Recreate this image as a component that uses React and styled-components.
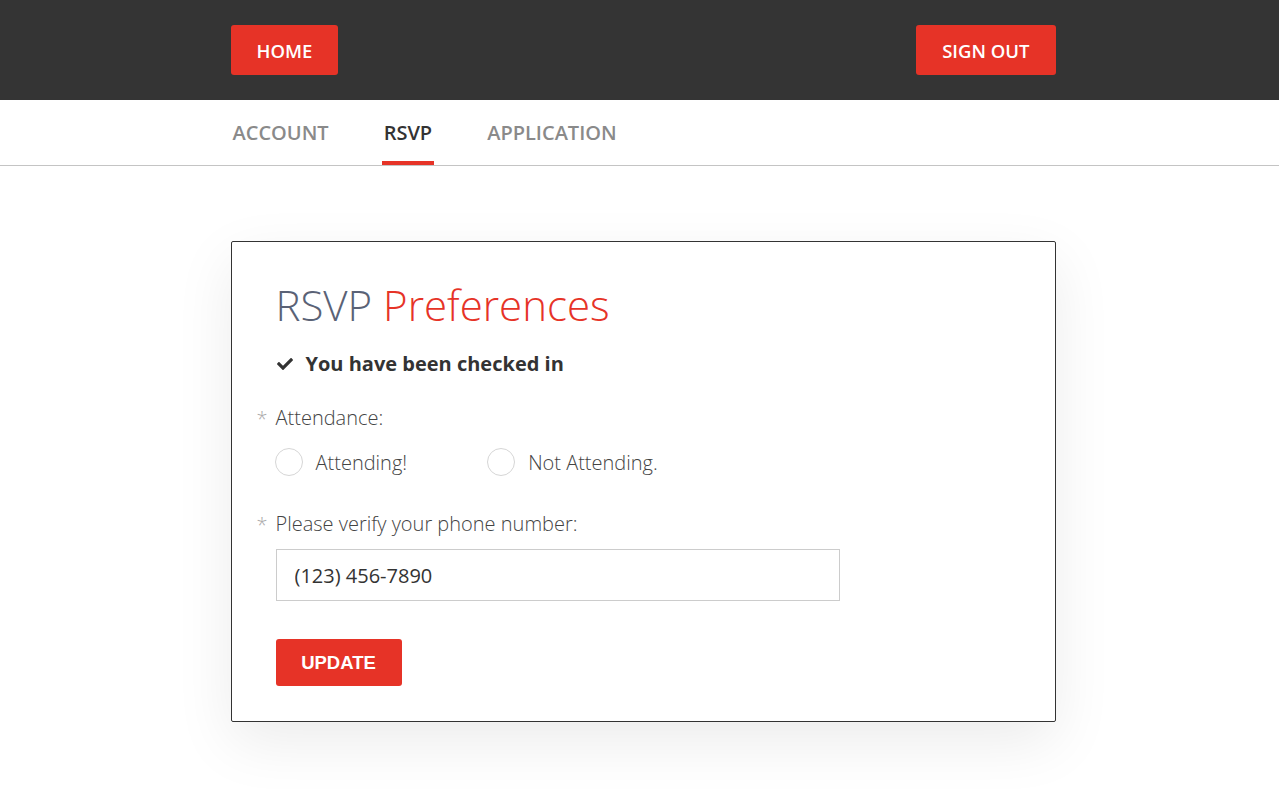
import styled, { createGlobalStyle } from "styled-components"
import { FaCheck } from "react-icons/fa"

const Global = createGlobalStyle`
  body {
    margin: 0;
    font-family: "Open Sans", "Liberation Sans", sans-serif;
    background: #fff;
  }
`

const TopBar = styled.header`
  height: 100px;
  background: #343434;
`

const Inner = styled.div`
  width: 825px;
  margin-left: calc(50% - 409px);
  box-sizing: border-box;
`

const TopInner = styled(Inner)`
  height: 100%;
  display: flex;
  align-items: center;
  justify-content: space-between;
`

const NavButton = styled.button`
  height: 50px;
  padding: 0 26px;
  border: none;
  border-radius: 3px;
  background: #e63327;
  color: #fff;
  font-family: "Open Sans", sans-serif;
  font-weight: 600;
  font-size: 18.5px;
  cursor: pointer;
`

const TabBar = styled.nav`
  height: 65px;
  border-bottom: 1px solid #c4c4c4;
`

const TabRow = styled(Inner)`
  height: 100%;
  display: flex;
  gap: 51px;
`

const Tab = styled.a`
  position: relative;
  display: flex;
  align-items: center;
  padding: 0 2px;
  font-size: 20px;
  font-weight: 600;
  color: ${p => (p.$active ? "#333" : "#8a8a8a")};
  &::after {
    content: "";
    display: ${p => (p.$active ? "block" : "none")};
    position: absolute;
    left: 0;
    right: 0;
    bottom: 0;
    height: 4px;
    background: #e63327;
  }
`

const Main = styled.main`
  padding-top: 75px;
  padding-bottom: 80px;
`

const Card = styled(Inner)`
  border: 1px solid #333;
  border-radius: 2px;
  padding: 38px 44px 35px;
  box-shadow: 0 20px 60px rgba(0, 0, 0, 0.08);
`

const Title = styled.h1`
  margin: 0;
  font-weight: 300;
  font-size: 42px;
  line-height: 50px;
  color: #5a6276;
  span {
    color: #e63327;
  }
`

const Checked = styled.p`
  margin: 20px 0 0;
  display: flex;
  align-items: center;
  gap: 13px;
  font-size: 20px;
  line-height: 27px;
  font-weight: 700;
  color: #333;
  svg {
    margin-left: 1px;
    color: #333;
  }
`

const Field = styled.div`
  margin-top: ${p => p.$top || 28}px;
`

const Label = styled.label`
  position: relative;
  display: block;
  font-size: 20px;
  line-height: 27px;
  font-weight: 300;
  color: #444;
  &::before {
    content: "*";
    position: absolute;
    left: -19px;
    top: 1px;
    color: #aaa;
  }
`

const RadioRow = styled.div`
  display: flex;
  gap: 81px;
  margin-top: 17px;
`

const RadioOption = styled.label`
  display: flex;
  align-items: center;
  gap: 13px;
  font-size: 20px;
  line-height: 27px;
  font-weight: 300;
  color: #444;
`

const Circle = styled.span`
  width: 26px;
  height: 26px;
  margin-left: -1px;
  border: 1px solid #d6d6d6;
  border-radius: 50%;
`

const PhoneInput = styled.input`
  display: block;
  margin-top: 12px;
  width: 564px;
  height: 52px;
  box-sizing: border-box;
  border: 1px solid #ccc;
  padding: 0 18px;
  font-family: "Open Sans", sans-serif;
  font-size: 20px;
  color: #333;
  outline: none;
`

const UpdateButton = styled.button`
  display: block;
  margin-top: 38px;
  width: 126px;
  height: 47px;
  border: none;
  border-radius: 3px;
  background: #e63327;
  color: #fff;
  font-family: "Liberation Sans", Arial, sans-serif;
  font-weight: 700;
  font-size: 18.5px;
`

export default function App() {
  return (
    <>
      <Global />
      <TopBar>
        <TopInner>
          <NavButton>HOME</NavButton>
          <NavButton>SIGN OUT</NavButton>
        </TopInner>
      </TopBar>
      <TabBar>
        <TabRow>
          <Tab>ACCOUNT</Tab>
          <Tab $active>RSVP</Tab>
          <Tab>APPLICATION</Tab>
        </TabRow>
      </TabBar>
      <Main>
        <Card>
          <Title>
            RSVP <span>Preferences</span>
          </Title>
          <Checked>
            <FaCheck size={16} />
            You have been checked in
          </Checked>
          <Field $top={27}>
            <Label>Attendance:</Label>
            <RadioRow>
              <RadioOption>
                <Circle />
                Attending!
              </RadioOption>
              <RadioOption>
                <Circle />
                Not Attending.
              </RadioOption>
            </RadioRow>
          </Field>
          <Field $top={34}>
            <Label>Please verify your phone number:</Label>
            <PhoneInput defaultValue="(123) 456-7890" />
          </Field>
          <UpdateButton>UPDATE</UpdateButton>
        </Card>
      </Main>
    </>
  )
}
